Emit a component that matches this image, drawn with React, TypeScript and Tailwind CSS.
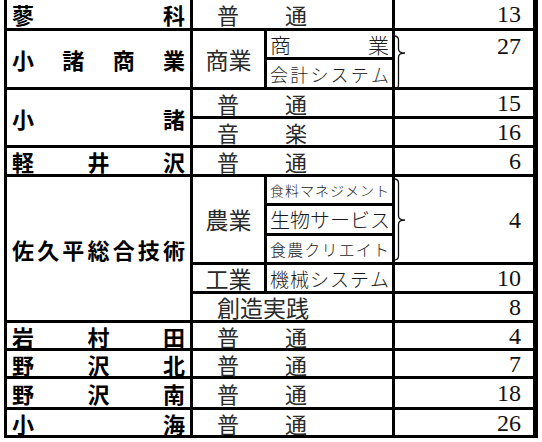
import React from "react";

const JP = "font-['Noto_Sans_CJK_JP',sans-serif]";

function Dist({ text, className = "" }: { text: string; className?: string }) {
  return (
    <div className={`flex h-full w-full items-center justify-between ${className}`}>
      {Array.from(text).map((c, i) => (
        <span key={i}>{c}</span>
      ))}
    </div>
  );
}

function School({ name, span = "" }: { name: string; span?: string }) {
  return (
    <div className={`bg-white ${span} ${JP} pl-[5px] pr-[5px] text-[22px] font-bold leading-none text-black`}>
      <Dist text={name} />
    </div>
  );
}

function Course({ a, b, span = "col-span-2" }: { a: string; b: string; span?: string }) {
  return (
    <div className={`bg-white ${span} ${JP} flex items-center gap-[46px] pl-[24px] text-[22px] font-normal leading-none text-[#2a2a2a]`}>
      <span>{a}</span>
      <span>{b}</span>
    </div>
  );
}

function Num({ n, span = "", top = false, brace }: { n: string; span?: string; top?: boolean; brace?: { h: number; tip: number } }) {
  return (
    <div
      className={`bg-white ${span} flex ${top ? "items-start pt-[3px]" : "items-center"} pr-[12px] font-['Liberation_Serif',serif] text-[24px] leading-none text-[#111]`}
    >
      {brace && <Brace h={brace.h} tip={brace.tip} />}
      <span className="ml-auto">{n}</span>
    </div>
  );
}

function Brace({ h, tip }: { h: number; tip: number }) {
  const d = `M 0 1 Q 4.5 1 4.5 5 L 4.5 ${tip - 4} Q 4.5 ${tip} 11 ${tip} Q 4.5 ${tip} 4.5 ${tip + 4} L 4.5 ${h - 5} Q 4.5 ${h - 1} 0 ${h - 1}`;
  return (
    <svg width="12" height={h} viewBox={`0 0 12 ${h}`} className="-ml-[1px] mt-[1px] shrink-0 self-start">
      <path d={d} fill="none" stroke="#111" strokeWidth="1.3" />
    </svg>
  );
}

function Sub({ text, size, span = "" }: { text: string; size: string; span?: string }) {
  return (
    <div className={`bg-white ${span} ${JP} px-[3px] ${size} font-light leading-none text-[#1a1a1a]`}>
      <Dist text={text} />
    </div>
  );
}

function Dept({ text, span = "" }: { text: string; span?: string }) {
  return (
    <div className={`bg-white ${span} ${JP} flex items-center justify-center text-[23px] font-normal leading-none text-[#2a2a2a]`}>
      {text}
    </div>
  );
}

export default function App() {
  return (
    <div className="h-[442px] w-[542px] bg-white">
      <div className="ml-[4px] grid w-fit grid-cols-[183px_71px_125px_138px] grid-rows-[28px_26px_27px_26px_26px_26px_26px_27px_26px_26px_26px_25px_25px_28px_25px] gap-[3px] bg-black pb-[3px] pl-[3px] pr-[5px]">
        <School name="蓼科" />
        <Course a="普" b="通" />
        <Num n="13" />

        <School name="小諸商業" span="row-span-2" />
        <Dept text="商業" span="row-span-2" />
        <Sub text="商業" size="text-[21px]" />
        <Num n="27" span="row-span-2" top brace={{ h: 55, tip: 18 }} />
        <Sub text="会計システム" size="text-[18px]" />

        <School name="小諸" span="row-span-2" />
        <Course a="普" b="通" />
        <Num n="15" />
        <Course a="音" b="楽" />
        <Num n="16" />

        <School name="軽井沢" />
        <Course a="普" b="通" />
        <Num n="6" />

        <School name="佐久平総合技術" span="row-span-5" />
        <Dept text="農業" span="row-span-3" />
        <Sub text="食料マネジメント" size="text-[14px]" />
        <Num n="4" span="row-span-3" brace={{ h: 83, tip: 42 }} />
        <Sub text="生物サービス" size="text-[20px]" />
        <Sub text="食農クリエイト" size="text-[16px]" />
        <Dept text="工業" />
        <Sub text="機械システム" size="text-[19px]" />
        <Num n="10" />
        <div className={`col-span-2 bg-white ${JP} flex items-center pl-[24px] text-[23px] font-normal leading-none text-[#2a2a2a]`}>
          創造実践
        </div>
        <Num n="8" />

        <School name="岩村田" />
        <Course a="普" b="通" />
        <Num n="4" />

        <School name="野沢北" />
        <Course a="普" b="通" />
        <Num n="7" />

        <School name="野沢南" />
        <Course a="普" b="通" />
        <Num n="18" />

        <School name="小海" />
        <Course a="普" b="通" />
        <Num n="26" />
      </div>
    </div>
  );
}
